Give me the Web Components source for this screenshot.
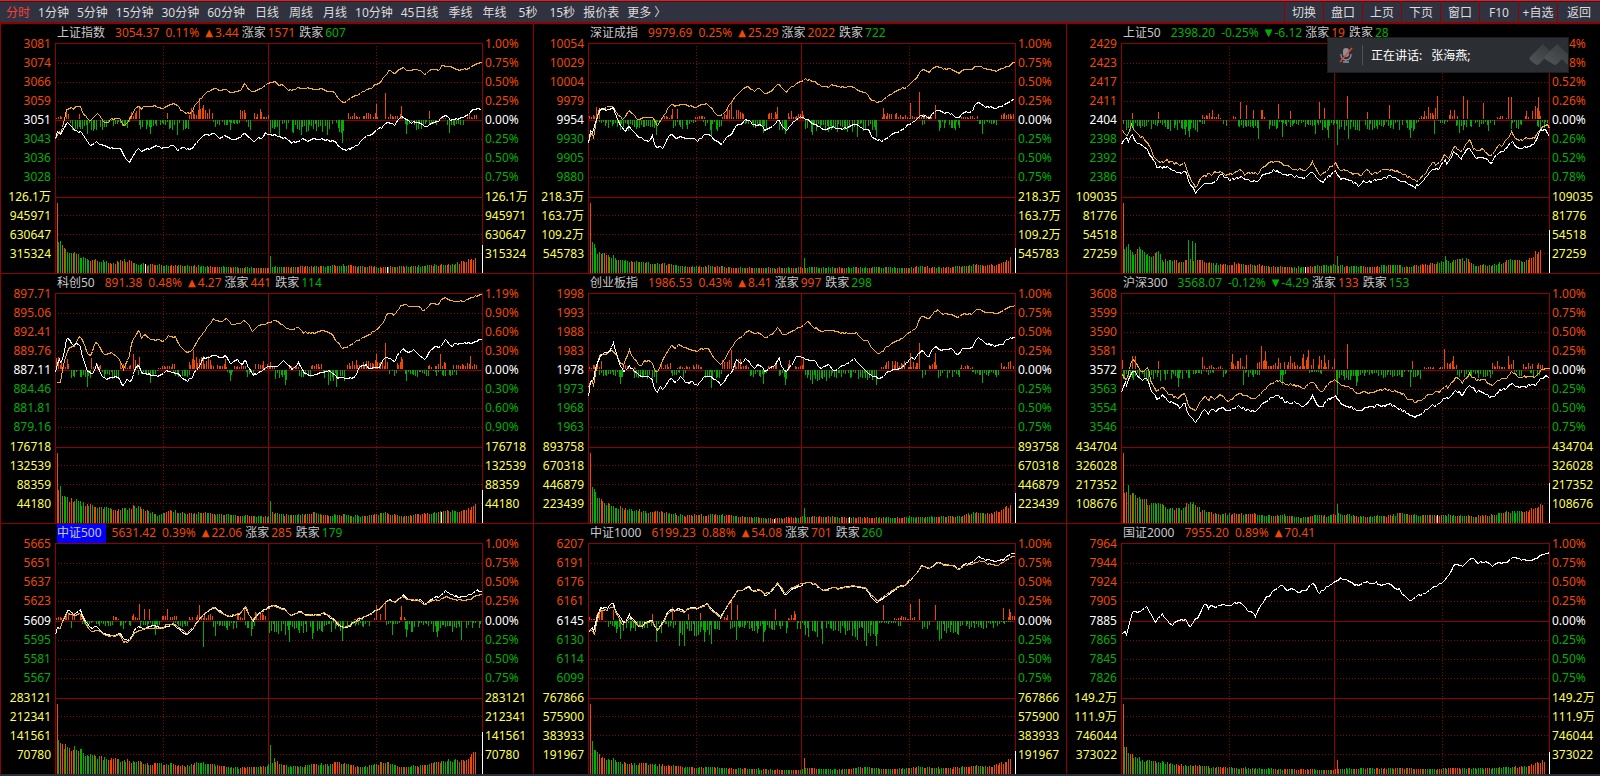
<!DOCTYPE html>
<html lang="zh-CN">
<head>
<meta charset="utf-8">
<title>大盘分时</title>
<style>
html,body{margin:0;background:#000}
body{font:12px/18px "Noto Sans","Noto Sans CJK SC",sans-serif;color:#c8c8c8;
--up:#f04800;--down:#00b000;--grid:#900000;--vol:#ffff50}
</style>
</head>
<body>
<market-app></market-app>
<script>
const define = (name, cls) => customElements.define(name, cls);
const shadow = (el, html) => { el.attachShadow({mode: 'open'}).innerHTML = html; };

/* One index: header texts, axis labels, and the intraday series.
   at: origin of the series units.
   swing tokens: a-b:h for a stretch of bars, a:h for a single bar.
   vol tokens: x,h for the profile, x:h for a single bar. */
const INDICES = [
{name:'上证指数',val:'3054.37',pct:'0.11%',chg:'3.44',rise:'1571',fall:'607',
 price:'3081 3074 3066 3059 3051 3043 3036 3028',pcts:'1.00 0.75 0.50 0.25 0.00 0.25 0.50 0.75',volume:'126.1万 945971 630647 315324',
 at:[162,130],last:84,whites:[425,1128],
 yellow:'162,415 171,390 176,405 185,375 193,325 198,328 206,322 213,327 219,320 226,323 234,318 241,335 250,350 259,360 270,357 281,340 290,347 300,362 306,366 315,366 328,355 350,355 360,378 366,372 376,362 385,340 395,325 405,316 412,327 420,318 450,318 475,325 488,318 503,311 515,316 530,332 543,341 555,338 565,322 580,298 592,290 600,277 615,270 625,265 640,273 657,268 673,280 690,272 703,270 712,250 722,265 733,279 745,270 760,264 775,253 790,247 798,245 810,254 825,254 838,268 852,271 870,260 878,268 895,262 915,268 938,264 950,274 970,275 982,292 998,308 1010,304 1025,290 1045,283 1060,272 1078,265 1095,252 1110,242 1120,225 1131,211 1147,219 1160,210 1171,202 1185,210 1215,208 1236,222 1255,210 1275,210 1285,199 1308,200 1325,208 1355,208 1370,200 1385,192 1399,188',
 white:'162,415 168,392 176,408 185,388 195,366 205,373 214,387 225,396 236,392 248,415 257,430 266,437 280,425 295,433 310,440 325,443 345,446 352,446 360,468 370,478 378,487 388,465 403,446 412,455 425,445 440,448 452,433 462,440 478,444 502,433 518,450 530,442 545,448 560,445 575,425 592,408 610,402 625,402 638,413 655,408 675,420 700,413 713,398 725,412 738,426 752,414 762,416 772,400 785,400 797,405 815,412 830,412 845,428 870,424 880,417 895,423 915,417 940,418 962,422 975,427 998,450 1015,446 1040,435 1058,412 1080,405 1097,388 1110,382 1122,366 1147,373 1158,358 1168,348 1180,358 1195,369 1215,364 1236,382 1250,372 1275,362 1294,343 1310,358 1340,356 1358,347 1370,333 1382,326 1397,326 1400,332',
 swing:'165-190:10 190-205:35 205-300:-38 300-378:-26 378-400:28 400-550:-34 552-620:36 622-680:-22 682-698:-18 700-716:38 718-738:-32 740-785:28 787-845:-48 850-1000:-42 1015-1100:20 1130-1175:18 1180-1245:-32 1250-1275:-24 1280-1300:14 1302-1350:-22 1360-1390:15 233:15 254:-42 405:32 439:-42 488:18 518:-44 580:62 593:42 671:-30 759:30 813:-50 877:-44 997:-68 952:-44 1096:45 1122:78 1168:38 1183:-42 1250:25 1308:-40',
 vol:'172,97 180,84 192,66 205,62 225,57 245,45 270,42 300,35 330,30 360,40 375,38 390,30 430,26 480,22 540,24 600,20 700,18 780,15 785:52 800,20 850,18 900,20 1000,24 1100,18 1180,20 1240,22 1270,26 1310,24 1340,32 1370,40 1385,50'},
{name:'深证成指',val:'9979.69',pct:'0.25%',chg:'25.29',rise:'2022',fall:'722',
 price:'10054 10029 10004 9979 9954 9930 9905 9880',pcts:'1.00 0.75 0.50 0.25 0.00 0.25 0.50 0.75',volume:'218.3万 163.7万 109.2万 545783',
 at:[170,130],last:75,whites:[],
 yellow:'170,425 178,390 185,415 192,365 200,325 208,328 220,322 240,318 248,330 256,345 270,360 288,330 298,342 315,360 330,352 350,352 360,356 370,375 385,355 395,335 413,310 422,320 440,312 460,317 484,323 495,314 515,311 528,325 542,343 556,349 570,330 590,298 605,278 618,268 633,260 650,273 665,265 683,280 705,270 721,250 733,265 745,275 760,262 780,247 790,244 800,236 815,241 830,247 845,258 865,260 880,253 900,261 945,262 960,273 978,280 990,295 1008,308 1025,300 1040,288 1070,270 1095,260 1110,247 1125,235 1133,215 1142,208 1160,217 1170,206 1187,199 1200,207 1230,208 1245,219 1262,207 1285,208 1293,200 1310,200 1330,208 1355,211 1375,205 1390,196 1407,188',
 white:'170,430 175,390 181,400 190,372 198,335 205,327 222,328 230,330 242,322 252,350 262,378 276,393 288,378 300,393 315,409 335,420 345,425 355,404 367,447 378,438 387,446 398,418 413,400 425,416 440,409 455,416 475,412 487,424 500,410 515,401 530,413 540,420 556,434 570,412 585,402 600,378 618,368 630,358 650,373 668,374 683,388 700,383 715,368 722,355 732,378 745,394 760,370 778,356 792,350 805,361 820,367 838,378 857,390 880,380 892,388 920,382 945,372 965,383 985,393 995,412 1010,420 1022,423 1040,412 1065,396 1085,388 1100,372 1120,363 1138,343 1160,354 1180,328 1200,338 1225,342 1243,354 1262,337 1285,332 1300,308 1325,320 1355,323 1370,320 1385,308 1407,300',
 swing:'173-192:14 192-210:38 203-260:-26 262-340:-36 345-380:-24 385-412:14 418-480:-28 482-512:12 505-560:-36 560-622:36 625-690:-30 692-722:22 724-745:-36 750-800:28 802-870:-40 872-1010:-40 1025-1120:20 1122-1170:16 1140-1155:-20 1188-1250:-28 1255-1305:12 1300-1360:-18 1370-1408:22 413:30 430:30 367:-45 528:-52 587:54 680:-38 742:-42 719:36 822:-44 952:-50 1006:-52 1026:34 1105:48 1131:80 1178:42 1191:-34 1236:-30 1316:-42',
 vol:'181,95 190,75 202,58 230,55 260,40 300,34 350,32 410,27 450,20 520,22 600,16 780,15 794:45 800,18 900,16 1000,18 1100,15 1130,20 1200,16 1290,25 1350,24 1380,35 1397,46'},
{name:'上证50',val:'2398.20',pct:'-0.25%',chg:'-6.12',rise:'19',fall:'28',down:true,
 price:'2429 2423 2417 2411 2404 2398 2392 2386',pcts:'1.04 0.78 0.52 0.26 0.00 0.26 0.52 0.78',volume:'109035 81776 54518 27259',
 at:[180,130],last:130,whites:[715],
 yellow:'184,388 192,410 200,402 210,373 215,390 228,404 240,412 248,425 253,420 265,448 278,476 290,490 310,482 330,488 350,495 365,487 375,530 385,545 397,565 408,537 415,525 425,532 432,518 442,530 450,517 470,513 485,524 505,518 525,508 537,528 545,515 575,520 590,502 610,485 635,483 650,495 665,500 690,508 715,510 735,486 745,510 760,525 780,505 800,488 815,512 830,510 850,520 875,524 890,510 910,522 940,508 960,510 980,513 1010,530 1035,543 1060,525 1072,500 1085,488 1095,497 1118,463 1128,475 1145,438 1165,458 1188,417 1200,446 1230,450 1250,470 1272,440 1290,430 1312,395 1330,425 1345,416 1380,413 1400,378 1415,375 1420,385',
 white:'180,430 190,412 200,422 210,402 220,420 240,435 255,450 265,470 285,502 310,500 335,513 350,520 367,510 375,545 397,583 405,562 420,550 440,552 455,540 470,522 485,535 500,538 520,530 545,540 575,543 590,525 625,510 650,520 680,530 710,535 735,512 745,530 763,547 780,530 800,512 812,535 840,540 868,556 885,542 900,545 930,535 960,530 985,540 1005,550 1030,562 1055,545 1070,520 1085,507 1100,508 1118,475 1125,495 1145,455 1165,478 1188,437 1205,470 1230,470 1250,490 1272,458 1295,445 1312,420 1332,450 1360,440 1380,425 1395,390 1412,385 1420,410',
 swing:'185-240:-36 242-310:-30 312-400:-38 400-425:-14 415-470:22 475-490:-26 505-515:22 518-575:-30 585-605:32 608-680:-30 682-740:-22 742-800:-32 802-870:-36 872-1045:-34 1045-1060:12 1060-1100:42 1100-1130:-12 1130-1160:30 1150-1220:-32 1225-1275:-18 1270-1300:14 1310-1345:-30 1345-1400:44 1385-1420:-30 212:18 286:20 443:26 525:50 541:42 562:26 634:44 669:24 753:52 768:34 834:70 892:20 956:42 1096:68 1171:70 1184:58 1229:48 1301:66 1312:66 1389:66 376:-50 365:-46 576:-56 647:-50 743:-42 779:-54 805:-74 838:-56 1017:-54 1089:-42 1161:-40 1245:-34',
 vol:'190,70 200,88 215,60 230,80 245,75 260,45 285,68 300,40 345,35 370,38 376:100 384:95 397:90 405,40 440,30 480,24 515,30 560,25 620,20 700,18 780,25 805:52 820,22 900,18 960,25 1000,20 1060,25 1116:52 1120,35 1185,42 1200,25 1260,25 1310,40 1350,35 1375,55 1400,82'},
{name:'科创50',val:'891.38',pct:'0.48%',chg:'4.27',rise:'441',fall:'114',
 price:'897.71 895.06 892.41 889.76 887.11 884.46 881.81 879.16',pcts:'1.19 0.90 0.60 0.30 0.00 0.30 0.60 0.90',volume:'176718 132539 88359 44180',
 at:[162,70],last:100,whites:[1287],
 yellow:'166,335 176,340 182,300 192,262 200,232 218,230 225,208 234,197 242,215 250,238 262,257 270,240 280,215 290,230 305,255 325,250 345,265 360,297 372,270 380,240 388,205 405,177 412,203 422,192 440,208 478,212 490,196 513,203 525,232 545,248 562,237 575,210 590,190 605,168 622,146 645,155 658,144 673,162 700,160 712,150 722,163 735,183 750,168 780,158 802,150 820,163 835,175 852,177 870,170 882,187 915,188 943,180 965,192 980,215 998,235 1010,230 1030,217 1060,200 1080,190 1100,175 1115,155 1128,127 1148,136 1163,110 1178,102 1190,110 1215,108 1232,122 1255,100 1275,103 1285,88 1297,83 1312,94 1350,93 1370,83 1382,78 1399,74',
 white:'162,305 170,268 178,276 186,255 193,205 202,203 212,230 220,220 232,222 242,262 253,300 270,310 282,280 295,315 310,330 325,320 345,322 358,350 370,325 380,338 392,300 403,285 415,310 440,313 460,318 475,310 488,300 500,308 515,310 530,325 545,335 560,318 575,295 592,265 607,263 625,255 645,265 657,253 670,283 690,270 703,285 713,265 722,290 735,313 762,305 777,287 790,290 808,288 825,270 838,285 850,298 870,280 885,310 910,320 930,305 960,303 980,325 1000,322 1012,328 1035,318 1045,290 1065,285 1078,295 1105,290 1120,260 1147,272 1170,235 1185,248 1203,240 1236,268 1252,240 1265,230 1280,230 1296,208 1310,227 1340,218 1370,220 1399,208',
 swing:'165-205:42 208-265:-26 268-298:16 298-345:-30 350-382:24 384-400:34 402-460:-26 462-515:16 505-552:-24 550-620:44 622-660:20 662-680:-20 682-715:24 716-740:-30 742-800:26 802-835:-36 838-870:14 872-905:-22 905-940:18 940-1005:-40 1005-1110:28 1112-1130:30 1132-1155:-18 1155-1175:36 1178-1245:-26 1245-1300:28 1260-1330:-22 1318-1385:20 254:-50 268:32 388:44 405:36 439:-38 564:56 657:30 672:-34 831:-44 954:-44 978:-50 1096:46 1122:78 1168:36 1183:-32 1282:44 1367:38',
 vol:'172,115 185,88 205,70 222,70 250,55 300,48 335,38 370,45 395,52 430,38 460,25 495,40 540,28 600,30 650,28 700,22 780,20 785:67 790,30 850,22 910,32 950,24 1000,25 1050,20 1120,30 1170,20 1220,28 1290,35 1350,38 1385,55'},
{name:'创业板指',val:'1986.53',pct:'0.43%',chg:'8.41',rise:'997',fall:'298',
 price:'1998 1993 1988 1983 1978 1973 1968 1963',pcts:'1.00 0.75 0.50 0.25 0.00 0.25 0.50 0.75',volume:'893758 670318 446879 223439',
 at:[170,70],last:90,whites:[707,930],
 yellow:'170,350 178,325 185,352 192,300 202,252 222,253 240,240 252,255 262,280 273,283 288,240 300,262 320,288 335,272 352,275 368,308 380,285 395,250 413,225 422,237 432,223 450,233 487,243 500,236 518,235 530,258 545,278 556,283 568,262 590,226 605,205 618,198 635,178 650,192 665,187 683,202 705,193 721,172 732,188 742,197 760,183 790,170 806,154 820,168 845,182 880,180 910,190 950,190 965,208 978,210 992,232 1008,248 1022,247 1035,232 1060,215 1085,202 1105,185 1122,175 1133,145 1140,137 1160,145 1175,125 1187,119 1197,132 1230,133 1243,145 1260,130 1283,132 1300,115 1320,125 1355,129 1370,124 1388,112 1407,107',
 white:'170,378 176,325 184,340 192,285 202,260 212,250 230,245 242,215 250,245 262,285 275,307 288,287 305,305 320,318 345,320 355,330 368,375 378,348 387,360 400,335 413,322 423,342 435,320 460,340 470,333 487,348 505,320 525,318 540,330 556,348 570,325 587,305 600,270 615,280 628,263 650,295 665,283 683,303 715,283 722,257 730,285 742,305 758,288 775,260 790,259 805,270 825,270 845,295 870,285 887,303 905,287 925,278 943,265 955,283 985,310 1010,325 1025,322 1040,305 1065,298 1085,290 1105,265 1120,268 1138,237 1158,262 1178,227 1195,240 1225,237 1243,254 1260,235 1283,234 1303,203 1325,220 1355,228 1375,220 1390,206 1407,202',
 swing:'173-192:14 192-212:32 203-270:-24 272-310:14 300-375:-28 378-412:24 410-455:-26 428-510:16 505-560:-28 560-612:36 615-640:14 640-690:-24 692-722:18 724-745:-32 750-798:30 800-865:-34 870-920:-26 925-1012:-34 1022-1120:26 1122-1135:30 1140-1155:-26 1155-1185:24 1188-1250:-26 1250-1290:14 1285-1365:-22 1370-1408:24 263:-42 367:-40 528:-54 587:56 680:-42 742:-44 794:34 822:-42 1006:-44 1105:48 1131:78 1178:48 1316:-38',
 vol:'181,108 190,88 205,68 240,55 280,42 320,38 370,34 410,30 450,22 540,27 600,20 700,14 790,18 794:45 800,20 900,18 1000,16 1100,18 1180,18 1260,22 1290,32 1340,28 1370,38 1397,55'},
{name:'沪深300',val:'3568.07',pct:'-0.12%',chg:'-4.29',rise:'133',fall:'153',down:true,
 price:'3608 3599 3590 3581 3572 3563 3554 3546',pcts:'1.00 0.75 0.50 0.25 0.00 0.25 0.50 0.75',volume:'434704 326028 217352 108676',
 at:[180,70],last:120,whites:[1097],
 yellow:'183,315 195,330 202,302 210,270 222,275 232,297 245,302 255,292 265,330 282,368 298,350 315,370 345,388 362,368 378,412 397,422 405,402 422,378 432,393 442,378 450,388 465,375 485,390 500,390 520,370 545,378 570,388 590,362 612,340 640,330 655,345 680,343 705,358 735,332 745,350 760,368 780,340 798,328 815,345 840,350 865,368 900,366 940,358 990,367 1010,385 1035,397 1060,382 1085,368 1105,363 1118,345 1128,352 1150,320 1168,338 1188,312 1205,328 1235,330 1255,347 1275,327 1295,325 1312,306 1335,322 1355,318 1380,318 1400,297 1420,296',
 white:'180,368 188,335 195,345 205,318 213,300 222,310 240,330 253,325 268,365 283,388 298,375 320,395 350,413 363,395 375,435 397,460 408,432 422,415 432,433 445,415 455,428 470,407 490,422 520,407 545,420 572,425 590,400 612,382 640,378 655,397 680,395 710,408 735,378 745,400 760,413 778,390 798,378 812,395 840,410 868,422 900,410 960,404 990,417 1015,435 1035,440 1060,425 1080,405 1100,405 1118,380 1130,390 1148,360 1168,375 1190,343 1208,363 1235,368 1255,384 1275,360 1295,358 1312,338 1330,352 1355,347 1380,345 1405,317 1415,318 1420,325',
 swing:'185-240:-32 242-330:-36 332-400:-34 402-450:-16 415-475:14 470-490:-24 500-545:28 528-580:-26 575-655:30 640-660:-34 660-700:24 700-740:40 725-765:-18 750-800:34 802-865:-40 868-950:-26 950-1050:-30 1060-1115:8 1125-1155:26 1155-1215:-24 1215-1260:-26 1255-1320:28 1320-1345:-30 1345-1375:18 1365-1395:-18 1385-1410:22 184:26 211:40 220:40 286:24 416:36 503:44 524:32 541:42 587:70 597:54 634:34 669:38 708:44 721:58 753:40 768:42 834:76 1023:24 1116:60 1142:40 1302:40 535:-44 647:-46 805:-74 860:-48 345:-50 1017:-50',
 vol:'190,100 198:115 204,80 230,85 255,62 285,62 310,45 350,42 377,65 397,58 410,40 450,28 500,28 560,28 600,22 650,25 700,15 735,22 780,22 805:58 815,28 870,20 950,22 1000,30 1050,22 1120,25 1200,22 1260,25 1300,36 1350,35 1380,45 1402,65'},
{name:'中证500',val:'5631.42',pct:'0.39%',chg:'22.06',rise:'285',fall:'179',selected:true,tall:true,avgOnTop:true,
 price:'5665 5651 5637 5623 5609 5595 5581 5567',pcts:'1.00 0.75 0.50 0.25 0.00 0.25 0.50 0.75',volume:'283121 212341 141561 70780',
 at:[162,70],last:126,whites:[],
 yellow:'165,325 176,325 185,298 195,275 205,280 215,288 225,285 234,278 245,300 258,328 272,335 285,328 305,345 330,348 350,345 360,365 378,363 390,340 405,330 420,328 440,325 475,322 488,312 503,310 520,322 545,342 560,325 580,300 590,285 605,270 622,263 640,275 665,288 700,280 713,260 722,278 735,300 750,283 780,265 798,256 815,265 830,268 845,287 870,275 890,285 925,285 945,280 960,290 980,308 998,322 1015,318 1040,300 1080,280 1110,262 1128,240 1150,245 1172,228 1190,240 1215,240 1235,253 1260,240 1280,240 1297,228 1320,238 1350,242 1370,236 1385,225 1399,224',
 white:'162,343 168,318 176,328 185,298 198,268 215,285 234,266 245,295 262,325 282,318 300,340 330,345 352,340 362,357 378,360 390,335 405,318 420,326 445,316 475,325 503,311 525,330 545,345 562,323 580,297 605,271 622,264 640,275 665,289 700,280 713,257 722,278 735,304 760,273 798,254 815,265 830,268 845,288 870,273 890,284 925,285 945,281 960,290 998,324 1015,318 1040,298 1080,280 1110,261 1128,238 1150,246 1172,226 1190,238 1225,240 1235,254 1262,233 1280,228 1297,211 1315,225 1340,232 1365,225 1385,210 1399,213',
 swing:'165-190:12 190-215:26 218-240:22 240-330:-18 330-348:22 350-382:-30 385-402:20 408-470:-20 472-515:18 505-550:-18 550-600:22 602-620:20 622-690:-30 690-712:16 714-740:-26 742-782:26 784-860:-50 862-1005:-40 1012-1075:-22 1030-1060:14 1090-1110:20 1125-1165:-20 1165-1185:14 1175-1250:-34 1255-1350:-36 1352-1400:-24 208:-20 405:48 420:34 434:34 488:32 454:-42 580:46 591:-78 627:-46 733:-44 711:40 843:-62 910:-54 997:-60 1096:44 1122:56 1168:42 1142:-42 1183:-48 1273:-48 1343:-56',
 vol:'172,110 185,88 215,80 235,75 245,62 300,48 350,42 400,38 440,30 500,32 540,24 580,36 640,26 700,18 780,24 785:87 797,45 830,25 880,22 910,32 950,28 990,35 1050,20 1125,38 1160,22 1220,25 1290,40 1350,42 1387,72'},
{name:'中证1000',val:'6199.23',pct:'0.88%',chg:'54.08',rise:'701',fall:'260',tall:true,avgOnTop:true,
 price:'6207 6191 6176 6161 6145 6130 6114 6099',pcts:'1.00 0.75 0.50 0.25 0.00 0.25 0.50 0.75',volume:'767866 575900 383933 191967',
 at:[170,70],last:70,whites:[],
 yellow:'172,335 180,322 186,350 195,295 205,270 225,270 242,256 256,290 270,315 288,293 305,306 318,320 335,311 355,302 370,331 385,312 398,285 413,270 433,272 450,274 465,264 487,266 515,252 530,274 556,291 570,261 590,232 605,209 618,212 633,197 650,215 668,209 683,223 700,213 721,188 732,205 742,220 760,204 790,192 808,186 830,192 852,212 880,203 895,206 915,200 950,198 978,206 990,222 1008,242 1022,234 1040,220 1070,200 1090,194 1105,179 1125,160 1138,135 1160,147 1187,125 1200,133 1230,136 1245,151 1262,136 1283,134 1305,122 1330,130 1355,137 1375,128 1390,116 1407,108',
 white:'170,337 180,318 186,335 195,285 205,262 225,263 242,248 252,275 265,300 275,307 288,285 305,303 318,318 335,310 355,302 370,330 385,310 398,280 413,265 422,275 433,265 450,272 465,262 487,265 515,250 530,273 556,290 570,262 590,233 605,210 618,212 633,198 650,215 668,208 683,227 700,214 721,190 732,208 742,227 760,208 790,195 808,186 830,193 852,212 880,202 895,206 915,199 950,198 978,208 990,228 1008,246 1022,240 1040,225 1070,202 1090,195 1105,180 1125,160 1138,135 1160,147 1187,123 1200,133 1230,135 1245,150 1262,133 1283,130 1303,110 1325,120 1355,125 1375,118 1390,106 1407,100',
 swing:'173-192:10 192-212:30 214-250:-20 250-310:-38 312-360:-28 362-400:-44 402-425:-28 428-530:-50 535-560:-28 560-582:30 584-612:-30 612-660:-32 660-720:-40 724-750:-44 750-775:22 776-798:-28 800-870:-60 872-940:-48 942-1010:-66 1010-1080:-18 1060-1120:12 1140-1165:-30 1185-1250:-44 1252-1310:-26 1312-1365:-26 1365-1400:-10 1392-1408:26 211:28 242:30 356:18 413:38 460:18 495:22 587:56 602:44 713:34 770:26 1026:46 1105:48 1131:64 1178:46 1375:36 1395:34 263:-54 367:-64 434:-76 449:-74 506:-64 528:-70 599:-56 680:-64 850:-68 978:-74 1006:-76 1191:-60 1197:-54',
 vol:'181,92 190,68 205,55 240,45 270,32 330,32 400,26 450,20 540,20 640,16 780,12 794:48 800,18 900,14 980,20 1060,14 1130,22 1200,17 1290,24 1350,24 1397,45'},
{name:'国证2000',val:'7955.20',pct:'0.89%',chg:'70.41',tall:true,
 price:'7964 7944 7924 7905 7885 7865 7845 7826',pcts:'1.00 0.75 0.50 0.25 0.00 0.25 0.50 0.75',volume:'149.2万 111.9万 746044 373022',
 at:[180,70],last:66,whites:[],yellow:'',
 white:'180,345 190,330 194,353 202,312 212,270 230,278 252,260 262,275 278,307 290,290 298,283 310,298 328,317 340,300 360,300 367,297 378,321 390,300 400,297 412,268 424,252 433,266 440,254 450,264 478,252 495,258 510,247 528,247 545,270 570,287 583,252 592,250 598,230 607,228 622,208 646,195 662,212 675,204 692,218 715,208 735,188 753,220 770,205 797,187 815,172 838,180 850,190 865,198 890,185 905,192 918,186 930,195 958,190 970,202 985,207 1000,228 1018,243 1040,225 1055,223 1080,205 1110,187 1133,162 1145,132 1170,140 1185,122 1197,115 1212,127 1238,125 1255,138 1275,127 1297,128 1318,110 1335,117 1365,122 1385,115 1402,102 1420,97',
 swing:'',
 vol:'190,85 205,58 230,47 260,38 320,34 340,28 400,25 440,20 540,18 650,15 780,12 805:42 815,16 1010,18 1060,14 1145,18 1250,17 1300,20 1360,24 1408,42'}
];

/* Price curves, swing bars and volume bars over a dotted grid. */
define('intraday-chart', class extends HTMLElement {
  connectedCallback() {
    const n = Number(this.getAttribute('index')), d = INDICES[n];
    const W = n % 3 === 2 ? 429 : 428, H = d.tall ? 231 : 230, [ox, oy] = d.at;
    let seed = 7919 * (1 + n);
    const rnd = () => (seed = (seed * 1103515245 + 12345) % 2147483648) / 2147483648;
    const X = x => Math.min(W - 1, Math.round((x - ox) * (W - 1) / 1241));
    const Y = y => Math.round(y / 3);
    const line = (x1, y1, x2, y2) => `M${x1} ${y1}L${x2} ${y2}`;
    const shift = d.tall ? 1 : 0;
    const rows = [20, 39, 58, 96 + shift, 115 + shift, 134 + shift, 172 + shift, 191 + shift, 210 + shift];
    const zero = 77 + shift, split = 154 + shift;
    const dots = rows.map(y => line(3, y + .5, W, y + .5)).join('') +
      [108, 321].map(x => line(x + .5, 3, x + .5, H)).join('');
    const solid = line(0, .5, W, .5) + line(0, zero + .5, W, zero + .5) + line(0, split + .5, W, split + .5) +
      [0, 213, W - 1].map(x => line(x + .5, 0, x + .5, H)).join('');
    const STEP = 1241 / 242;

    const bars = {up: '', down: '', white: ''};
    const bar = (key, x, y, h) => { if (h > 0) bars[key] += `M${x} ${y}h1v${h}h-1z`; };
    const swing = (x, h) => {
      const k = Math.max(1, Math.round(Math.abs(h) / 3));
      h > 0 ? bar('up', X(x), zero - k - 1, k) : bar('down', X(x), zero, k);
    };
    for (const t of d.swing.split(' ').filter(Boolean)) {
      const [r, h] = t.split(':'), [a, b] = r.split('-').map(Number);
      if (!b) { swing(a, +h); continue; }
      for (let x = a; x <= b; x += STEP) if (rnd() < .92) swing(x, h * (.15 + .8 * rnd()));
    }
    const profile = [], single = [];
    for (const t of d.vol.split(' ')) (t.includes(',') ? profile : single).push(t.split(/[,:]/).map(Number));
    const sample = (pts, x) => {
      let i = 1;
      while (i < pts.length - 1 && pts[i][0] < x) i++;
      const [a, p] = pts[i - 1], [b, q] = pts[i];
      return p + (q - p) * Math.max(0, Math.min(1, (x - a) / (b - a)));
    };
    bar('up', 2, H - 70, 70);
    let key = 'down';
    for (let x = profile[0][0]; x <= profile[profile.length - 1][0]; x += STEP) {
      if (rnd() < .4) key = key === 'up' ? 'down' : 'up';
      const rel = (x - ox) / 1241;
      const s = single.find(v => Math.abs(v[0] - x) <= STEP / 2);
      const k = s && rel > .1 && !d.tall ? 'down' : rel > .95 ? 'up' : rel > .04 && rel < .12 && rnd() < .6 ? 'down' : key;
      const h = Math.round((s ? s[1] : sample(profile, x) * (.85 + .25 * rnd())) / 3);
      bar(d.whites.some(w => Math.abs(w - x) < STEP / 2) ? 'white' : k, X(x), H - h, h);
    }
    bar('white', W - 1, H - Math.round(d.last / 3), Math.round(d.last / 3));

    const curve = (src, wobble) => {
      if (!src) return '';
      const pts = src.split(' ').map(p => p.split(',').map(Number));
      const end = pts[pts.length - 1][0];
      let out = '';
      for (let x = pts[0][0]; x <= end; x += STEP)
        out += `${out ? 'L' : 'M'}${X(x) + .5} ${Y(sample(pts, x) - oy + (rnd() - .5) * wobble) + .5}`;
      return out + `L${X(end) + .5} ${Y(sample(pts, end) - oy) + .5}`;
    };
    const rough = d.down ? 7 : 4;
    const avg = `<path class="avg" d="${curve(d.yellow, rough)}"/>`;
    const now = `<path class="now" d="${curve(d.white, rough + 1)}"/>`;
    shadow(this, `<style>
      :host{display:block;min-width:0}
      svg{display:block;width:100%;height:${H}px}
      path{fill:none;stroke-width:1}
      .grid{stroke:var(--grid)} .dots{stroke-dasharray:1 2}
      .u{fill:var(--up)} .d{fill:var(--down)} .w{fill:#fff}
      .avg{stroke:#f0b030} .now{stroke:#fff}
    </style>
    <svg viewBox="0 0 ${W} ${H}" preserveAspectRatio="none" shape-rendering="crispEdges" aria-hidden="true">
      <path class="grid dots" d="${dots}"/><path class="grid" d="${solid}"/>
      <path class="u" d="${bars.up}"/><path class="d" d="${bars.down}"/><path class="w" d="${bars.white}"/>
      ${d.avgOnTop ? now + avg : avg + now}
    </svg>`);
  }
});

/* Twelve labels beside a chart: eight levels, four volumes. */
define('axis-labels', class extends HTMLElement {
  connectedCallback() {
    const d = INDICES[this.getAttribute('index')];
    const right = this.hasAttribute('right');
    const levels = right ? d.pcts.split(' ').map(v => v + '%') : d.price.split(' ');
    const cls = i => i < 4 ? 'up' : i === 4 ? 'mid' : 'down';
    shadow(this, `<style>
      :host{display:block;text-align:${right ? 'left' : 'right'};padding:0 ${right ? 2 : 4}px;margin-top:-9px;white-space:nowrap}
      div{display:grid}
      .levels{grid-template-rows:repeat(4,19px) ${d.tall ? 20 : 19}px repeat(3,19px)}
      .volumes{grid-template-rows:20px repeat(3,19px);color:var(--vol)}
      span{align-self:center;line-height:19px}
      .up{color:var(--up)} .mid{color:#fff} .down{color:var(--down)}
    </style>
    <div class="levels">${levels.map((t, i) => `<span class="${cls(i)}">${t}</span>`).join('')}</div>
    <div class="volumes">${d.volume.split(' ').map(t => `<span>${t}</span>`).join('')}</div>`);
  }
});

define('index-panel', class extends HTMLElement {
  connectedCallback() {
    const n = this.getAttribute('index'), d = INDICES[n];
    const tone = d.down ? '--down' : '--up';
    shadow(this, `<style>
      :host{display:grid;grid-template-columns:54px minmax(0,1fr) 50px;grid-template-rows:19px auto;
        align-content:start;border-left:1px solid var(--grid);border-bottom:1px solid var(--grid)}
      :host([last]){border-bottom:0}
      h2{grid-column:2/4;margin:0;font:inherit;display:flex;padding-left:2px;white-space:nowrap;line-height:18px;overflow:hidden}
      .name{margin-right:10px}
      .name.sel{background:#00f;padding-right:4px;margin-right:6px}
      .q{color:var(${tone});margin-right:6px}
      .tri{font:10px/18px "DejaVu Sans",sans-serif;color:var(${tone});margin-right:2px}
      .chg{margin-right:3px}
      .r{color:var(--up);margin:0 4px 0 2px} .f{color:var(--down);margin-left:2px}
      axis-labels,intraday-chart{grid-row:2}
    </style>
    <h2><span class="name${d.selected ? ' sel' : ''}">${d.name}</span><span class="q">${d.val}</span><span class="q">${d.pct}</span><span class="tri">${d.down ? '▼' : '▲'}</span><span class="q chg">${d.chg}</span>${d.rise ? `<span>涨家</span><span class="r">${d.rise}</span><span>跌家</span><span class="f">${d.fall}</span>` : ''}</h2>
    <axis-labels index="${n}"></axis-labels><intraday-chart index="${n}"></intraday-chart><axis-labels index="${n}" right></axis-labels>`);
  }
});

define('period-bar', class extends HTMLElement {
  connectedCallback() {
    const periods = ['分时','1分钟','5分钟','15分钟','30分钟','60分钟','日线','周线','月线','10分钟','45日线','季线','年线','5秒','15秒','报价表','更多 〉'];
    const wide = ['日线','周线','月线','季线','年线'], far = ['5秒','15秒'];
    const cls = p => p === '分时' ? 'on' : wide.includes(p) ? 'wide' : far.includes(p) ? 'far' : '';
    shadow(this, `<style>
      :host{display:flex;justify-content:space-between;height:21px;background:#303240;
        border-top:1px solid #e02020;border-bottom:2px solid var(--grid);box-shadow:inset 0 1px #3a1620}
      nav{display:flex;gap:8px;padding-left:6px}
      .tools{gap:0;padding:0}
      button{font:inherit;line-height:19px;color:#dcdcdc;background:none;border:0;margin:0;padding:2px 0 0;white-space:nowrap}
      .on{color:#ff3c3c} .wide{margin-left:2px} .far{margin-left:4px}
      .tools button{width:39px;border-left:1px solid var(--grid)}
      .tools button:last-child{width:43px}
    </style>
    <nav aria-label="周期">${periods.map(p => `<button type="button" class="${cls(p)}">${p}</button>`).join('')}</nav>
    <nav class="tools" aria-label="操作">${['切换','盘口','上页','下页','窗口','F10','+自选','返回'].map(p => `<button type="button">${p}</button>`).join('')}</nav>`);
  }
});

/* Floating bar of the meeting client. */
define('speaker-toast', class extends HTMLElement {
  connectedCallback() {
    shadow(this, `<style>
      :host{display:flex;align-items:center;box-sizing:border-box;width:242px;height:36px;background:#2b2f33;
        border:1px solid #1b1d20;color:#fff;overflow:hidden}
      .mic{width:14px;height:16px;margin-left:11px}
      i{width:1px;height:20px;background:#50545a;margin:0 8px 0 9px}
      span,b{padding-top:1px}
      b{font-weight:400;margin-left:9px}
      .logo{width:39px;height:24px;margin-left:auto}
    </style>
    <svg class="mic" viewBox="0 0 14 16" aria-hidden="true"><rect x="4" y="1" width="6" height="9" rx="3" fill="#8c9094"/><path d="M2 7v1a5 5 0 0 0 10 0V7M7 13v2M4 15h6" fill="none" stroke="#8c9094" stroke-width="1.3"/><path d="M1 15 13 1" stroke="#d8453c" stroke-width="1.5"/></svg>
    <i></i><span>正在讲话:</span><b>张海燕;</b>
    <svg class="logo" viewBox="0 0 39 24" aria-hidden="true"><defs><linearGradient id="g" x1="1" y1="0" x2="0" y2="1"><stop offset="0" stop-color="#34383b"/><stop offset="1" stop-color="#54575a"/></linearGradient></defs><path d="M1 14 14 1l8 8-12 12q-2 2-4 0L1 17q-1-1 0-3z" fill="url(#g)"/><path d="M16 13 28 1l11 10v11L33 16l-5 5q-2 2-4 0l-8-5q-1-1 0-3z" fill="url(#g)"/></svg>`);
  }
});

define('market-app', class extends HTMLElement {
  connectedCallback() {
    shadow(this, `<style>
      :host{display:block;position:relative;min-height:100vh}
      main{display:grid;grid-template-columns:minmax(0,533fr) minmax(0,533fr) minmax(0,534fr);border-bottom:2px solid #2a2e38}
      speaker-toast{position:absolute;top:37px;right:31px}
    </style>
    <period-bar></period-bar>
    <main>${INDICES.map((d, i) => `<index-panel index="${i}"${d.tall ? ' last' : ''}></index-panel>`).join('')}</main>
    <speaker-toast></speaker-toast>`);
  }
});
</script>
</body>
</html>
